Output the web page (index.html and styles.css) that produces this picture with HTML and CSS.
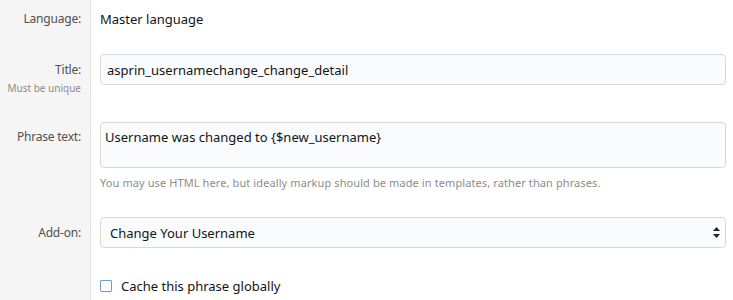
FILE: index.html
```
<!DOCTYPE html>
<html lang="en">
<head>
  <meta charset="UTF-8">
  <title>Edit phrase</title>
  <link rel="stylesheet" href="styles.css">
</head>
<body>
  <form class="phrase-form">
    <!-- Language -->
    <div class="form-row row-language">
      <div class="form-label">Language:</div>
      <div class="form-field">Master language</div>
    </div>

    <!-- Title -->
    <div class="form-row row-title">
      <div class="form-label">
        <label for="title">Title:</label>
        <div class="label-hint">Must be unique</div>
      </div>
      <div class="form-field">
        <input type="text" id="title" class="input" value="asprin_usernamechange_change_detail">
      </div>
    </div>

    <!-- Phrase text -->
    <div class="form-row row-phrase">
      <div class="form-label"><label for="phrase">Phrase text:</label></div>
      <div class="form-field">
        <textarea id="phrase" class="input textarea">Username was changed to {$new_username}</textarea>
        <div class="explain">You may use HTML here, but ideally markup should be made in templates, rather than phrases.</div>
      </div>
    </div>

    <!-- Add-on -->
    <div class="form-row row-addon">
      <div class="form-label"><label for="addon">Add-on:</label></div>
      <div class="form-field">
        <div class="select-wrap">
          <select id="addon" class="input select">
            <option>Change Your Username</option>
          </select>
          <svg class="select-arrow" width="7" height="11" viewBox="0 0 7 11">
            <path d="M3.5 0 L7 4 L0 4 Z M3.5 11 L7 7 L0 7 Z" fill="#222"/>
          </svg>
        </div>
      </div>
    </div>

    <!-- Options -->
    <div class="form-row row-options">
      <div class="form-label"></div>
      <div class="form-field">
        <label class="checkbox">
          <span class="checkbox-box"></span>
          Cache this phrase globally
        </label>
      </div>
    </div>
  </form>
</body>
</html>
```

FILE: styles.css
```
* {
  box-sizing: border-box;
  margin: 0;
  padding: 0;
}

body {
  font-family: 'Noto Sans', 'Segoe UI', Arial, sans-serif;
  font-size: 13px;
  line-height: 18px;
  color: #141414;
  background-color: #fff;
}

.phrase-form {
  width: 733px;
  height: 300px;
  overflow: hidden;
}

.form-row {
  display: grid;
  grid-template-columns: 91px 1fr;
}

.form-label {
  background-color: #f5f5f5;
  border-right: 1px solid #e2e2e2;
  text-align: right;
  padding-right: 9px;
  color: #505050;
  font-size: 12px;
  letter-spacing: -0.2px;
}

.form-field {
  padding-left: 9px;
  padding-right: 7px;
}

.label-hint {
  font-size: 10px;
  line-height: 12px;
  letter-spacing: 0;
  color: #8c8c8c;
  margin-top: 3px;
}

/* row spacing */
.row-language .form-label,
.row-language .form-field {
  padding-top: 10px;
  padding-bottom: 10px;
}

.row-title .form-label {
  padding-top: 23px;
}

.row-title .form-field {
  padding-top: 16px;
  padding-bottom: 10px;
}

.row-phrase .form-label {
  padding-top: 33px;
}

.row-phrase .form-field {
  padding-top: 27px;
  padding-bottom: 10px;
}

.row-addon .form-label {
  padding-top: 23px;
}

.row-addon .form-field {
  padding-top: 16px;
  padding-bottom: 10px;
}

.row-options .form-field {
  padding-top: 19px;
  padding-bottom: 10px;
}

.input {
  display: block;
  width: 100%;
  height: 31px;
  padding: 6px 6px;
  font: inherit;
  color: #141414;
  background-color: #f9fbfd;
  border: 1px solid #d8d8d8;
  border-radius: 4px;
  outline: none;
}

.textarea {
  height: 46px;
  resize: none;
  padding: 5px 4px;
}

.explain {
  margin-top: 7px;
  font-size: 11px;
  line-height: 16px;
  letter-spacing: 0.1px;
  color: #8c8c8c;
}

.select-wrap {
  position: relative;
}

.select {
  appearance: none;
  -webkit-appearance: none;
  padding-left: 9px;
}

.select-arrow {
  position: absolute;
  right: 6px;
  top: 10px;
}

.checkbox {
  display: flex;
  align-items: center;
  gap: 9px;
  color: #141414;
}

.checkbox-box {
  width: 12px;
  height: 12px;
  border: 1px solid #6d9dc5;
  border-radius: 1px;
  background-color: #fff;
}
```
